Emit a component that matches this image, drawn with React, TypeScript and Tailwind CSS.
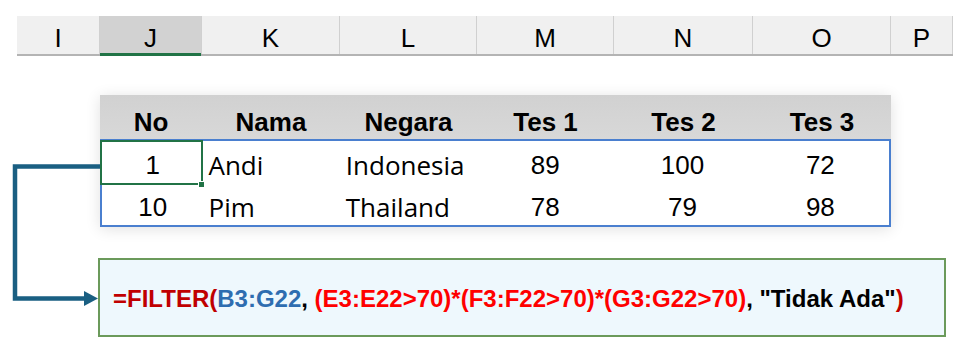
const colHeads = [
  { label: 'I', w: 'w-[83px]' },
  { label: 'J', w: 'w-[102px]', active: true },
  { label: 'K', w: 'w-[138px]' },
  { label: 'L', w: 'w-[137px]' },
  { label: 'M', w: 'w-[137px]' },
  { label: 'N', w: 'w-[139px]' },
  { label: 'O', w: 'w-[138px]' },
  { label: 'P', w: 'w-[62px]' },
];

const cols = ['w-[102px]', 'w-[138px]', 'w-[137px]', 'w-[137px]', 'w-[139px]', 'w-[138px]'];
const heads = ['No', 'Nama', 'Negara', 'Tes 1', 'Tes 2', 'Tes 3'];
const rows = [
  ['1', 'Andi', 'Indonesia', '89', '100', '72'],
  ['10', 'Pim', 'Thailand', '78', '79', '98'],
];

function Connector() {
  return (
    <svg className="absolute left-0 top-0" width="110" height="320" viewBox="0 0 110 320">
      <path d="M100 166.5 H15 V298.5 H86" fill="none" stroke="#1a5f82" strokeWidth="4.5" />
      <path d="M84 291 L98 298.5 L84 306 Z" fill="#1a5f82" />
    </svg>
  );
}

export default function App() {
  return (
    <div className="relative w-[973px] h-[358px] bg-white overflow-hidden font-['Liberation_Sans',Arial,sans-serif] text-black">
      {/* column letters */}
      <div className="ml-[17px] mt-[16px] flex h-[40px] border-b-2 border-[#b4b4b4] bg-[#f0f0f0] w-[936px]">
        {colHeads.map((c) => (
          <div
            key={c.label}
            className={`${c.w} relative flex items-center justify-center pt-[5px] border-r border-[#d0d0d0] text-[26px] leading-none ${c.active ? 'bg-[#d2d2d2]' : ''}`}
          >
            {c.label}
            {c.active && <div className="absolute left-0 right-0 -bottom-[2px] h-[3px] bg-[#217346]" />}
          </div>
        ))}
      </div>

      {/* table */}
      <div className="ml-[100px] mt-[39px] w-[791px] shadow-[0_2px_14px_rgba(0,0,0,0.12)]">
        <div className="flex h-[44px] bg-gradient-to-b from-[#d1d1d1] to-[#d8d8d8]">
          {heads.map((h, i) => (
            <div key={h} className={`${cols[i]} flex items-center justify-center pt-[9px] text-[26px] font-bold leading-none`}>
              {h}
            </div>
          ))}
        </div>
        <div className="relative border-2 border-[#4a7fcf] bg-white">
          {rows.map((r, ri) => (
            <div key={ri} className="flex h-[42px]">
              {r.map((v, i) => (
                <div
                  key={i}
                  className={`${cols[i]} flex items-center pt-[6px] leading-none ${i === 1 || i === 2 ? "justify-start pl-[5px] font-['Open_Sans',sans-serif] text-[26px]" : 'justify-center text-[26px]'}`}
                >
                  {v}
                </div>
              ))}
            </div>
          ))}
          <div className="absolute -left-[2px] -top-[1px] w-[103px] h-[45px] border-[2.5px] border-[#217346]" />
          <div className="absolute left-[96px] top-[40px] w-[7px] h-[7px] bg-[#217346] border border-white" />
        </div>
      </div>

      {/* formula */}
      <div className="ml-[98px] mt-[31px] w-[848px] h-[79px] border-2 border-[#6b9a5b] bg-[#eef8fd] flex items-center pl-[13px] pt-[3px] text-[24px] font-bold whitespace-nowrap leading-none">
        <span className="text-[#c00000]">=FILTER(</span>
        <span className="text-[#2e6db0]">B3:G22</span>
        <span>,&nbsp;</span>
        <span className="text-[#ff0000]">(E3:E22&gt;70)*(F3:F22&gt;70)*(G3:G22&gt;70)</span>
        <span>, "Tidak Ada"</span>
        <span className="text-[#c00000]">)</span>
      </div>

      <Connector />
    </div>
  );
}
